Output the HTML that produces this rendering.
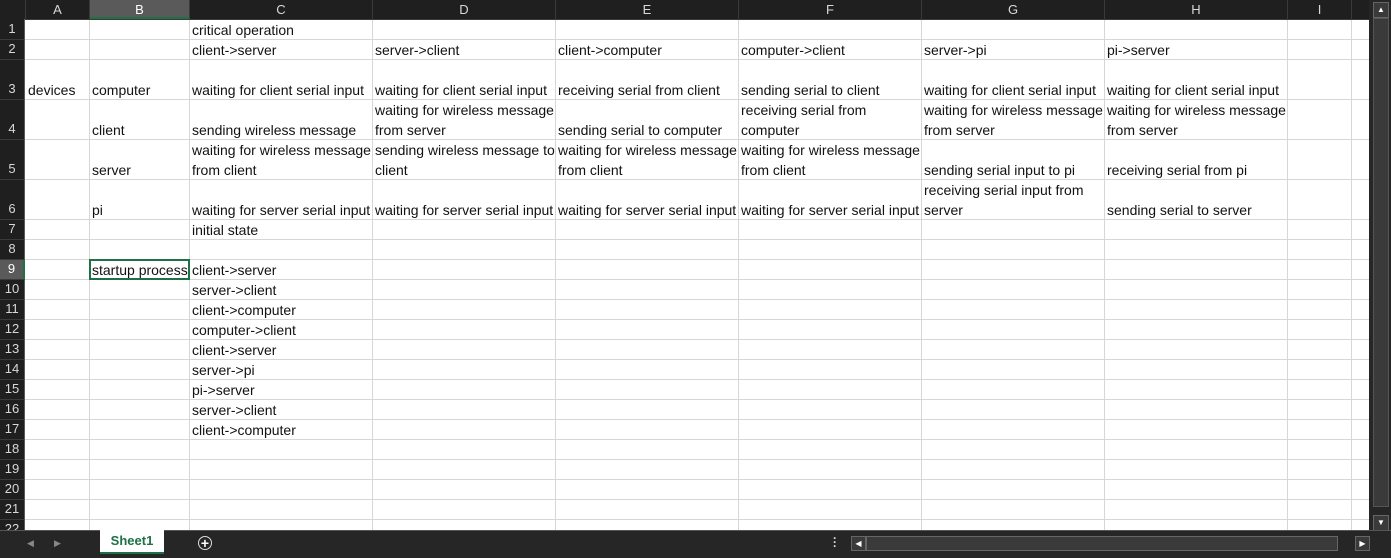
<!DOCTYPE html><html><head><style>
body{margin:0;width:1391px;height:558px;overflow:hidden;background:#262626;font-family:"Liberation Sans",sans-serif;position:relative}
#sheet{position:absolute;left:0;top:0;width:1369px;height:530px;background:#fff;overflow:hidden}
.h{position:absolute;left:25px;width:1344px;height:1px;background:#d6d6d6}
.v{position:absolute;top:19px;width:1px;height:511px;background:#d6d6d6}
.c{position:absolute;font-size:14px;color:#111;line-height:20px;padding-left:3px;display:flex;align-items:flex-end;white-space:nowrap}
#ch{position:absolute;left:0;top:0;width:1369px;height:19px;background:#1f1f1f;border-bottom:1px solid #3a3a3a}
.ch{position:absolute;top:0;height:19px;line-height:19px;text-align:center;color:#d8d8d8;font-size:13px;border-right:1px solid #3a3a3a;box-sizing:border-box}
#rh{position:absolute;left:0;top:19px;width:25px;height:511px;background:#1f1f1f;border-right:1px solid #5a5a5a;box-sizing:border-box}
.rh{position:absolute;left:0;width:24px;text-align:center;color:#d8d8d8;font-size:13px;border-bottom:1px solid #3a3a3a;box-sizing:border-box;display:flex;align-items:flex-end;justify-content:center;line-height:20px}
#bar{position:absolute;left:0;top:530px;width:1391px;height:28px;background:#262626;border-top:1px solid #555;box-sizing:border-box}
</style></head><body>
<div id="sheet">
<div class="h" style="top:39px"></div><div class="h" style="top:59px"></div><div class="h" style="top:99px"></div><div class="h" style="top:139px"></div><div class="h" style="top:179px"></div><div class="h" style="top:219px"></div><div class="h" style="top:239px"></div><div class="h" style="top:259px"></div><div class="h" style="top:279px"></div><div class="h" style="top:299px"></div><div class="h" style="top:319px"></div><div class="h" style="top:339px"></div><div class="h" style="top:359px"></div><div class="h" style="top:379px"></div><div class="h" style="top:399px"></div><div class="h" style="top:419px"></div><div class="h" style="top:439px"></div><div class="h" style="top:459px"></div><div class="h" style="top:479px"></div><div class="h" style="top:499px"></div><div class="h" style="top:519px"></div>
<div class="v" style="left:89px"></div><div class="v" style="left:189px"></div><div class="v" style="left:372px"></div><div class="v" style="left:555px"></div><div class="v" style="left:738px"></div><div class="v" style="left:921px"></div><div class="v" style="left:1104px"></div><div class="v" style="left:1287px"></div><div class="v" style="left:1351px"></div>

<div class="c" style="left:189px;top:20px;height:20px">critical operation</div>
<div class="c" style="left:189px;top:40px;height:20px">client-&gt;server</div>
<div class="c" style="left:372px;top:40px;height:20px">server-&gt;client</div>
<div class="c" style="left:555px;top:40px;height:20px">client-&gt;computer</div>
<div class="c" style="left:738px;top:40px;height:20px">computer-&gt;client</div>
<div class="c" style="left:921px;top:40px;height:20px">server-&gt;pi</div>
<div class="c" style="left:1104px;top:40px;height:20px">pi-&gt;server</div>

<div class="c" style="left:25px;top:60px;height:40px">devices</div>
<div class="c" style="left:89px;top:60px;height:40px">computer</div>
<div class="c" style="left:189px;top:60px;height:40px">waiting for client serial input</div>
<div class="c" style="left:372px;top:60px;height:40px">waiting for client serial input</div>
<div class="c" style="left:555px;top:60px;height:40px">receiving serial from client</div>
<div class="c" style="left:738px;top:60px;height:40px">sending serial to client</div>
<div class="c" style="left:921px;top:60px;height:40px">waiting for client serial input</div>
<div class="c" style="left:1104px;top:60px;height:40px">waiting for client serial input</div>

<div class="c" style="left:89px;top:100px;height:40px">client</div>
<div class="c" style="left:189px;top:100px;height:40px">sending wireless message</div>
<div class="c" style="left:372px;top:100px;height:40px">waiting for wireless message<br>from server</div>
<div class="c" style="left:555px;top:100px;height:40px">sending serial to computer</div>
<div class="c" style="left:738px;top:100px;height:40px">receiving serial from<br>computer</div>
<div class="c" style="left:921px;top:100px;height:40px">waiting for wireless message<br>from server</div>
<div class="c" style="left:1104px;top:100px;height:40px">waiting for wireless message<br>from server</div>

<div class="c" style="left:89px;top:140px;height:40px">server</div>
<div class="c" style="left:189px;top:140px;height:40px">waiting for wireless message<br>from client</div>
<div class="c" style="left:372px;top:140px;height:40px">sending wireless message to<br>client</div>
<div class="c" style="left:555px;top:140px;height:40px">waiting for wireless message<br>from client</div>
<div class="c" style="left:738px;top:140px;height:40px">waiting for wireless message<br>from client</div>
<div class="c" style="left:921px;top:140px;height:40px">sending serial input to pi</div>
<div class="c" style="left:1104px;top:140px;height:40px">receiving serial from pi</div>

<div class="c" style="left:89px;top:180px;height:40px">pi</div>
<div class="c" style="left:189px;top:180px;height:40px">waiting for server serial input</div>
<div class="c" style="left:372px;top:180px;height:40px">waiting for server serial input</div>
<div class="c" style="left:555px;top:180px;height:40px">waiting for server serial input</div>
<div class="c" style="left:738px;top:180px;height:40px">waiting for server serial input</div>
<div class="c" style="left:921px;top:180px;height:40px">receiving serial input from<br>server</div>
<div class="c" style="left:1104px;top:180px;height:40px">sending serial to server</div>

<div class="c" style="left:189px;top:220px;height:20px">initial state</div>
<div style="position:absolute;left:89px;top:259px;width:101px;height:21px;border:2px solid #1e7145;box-sizing:border-box"></div>
<div class="c" style="left:89px;top:260px;height:20px">startup process</div>
<div class="c" style="left:189px;top:260px;height:20px">client-&gt;server</div>
<div class="c" style="left:189px;top:280px;height:20px">server-&gt;client</div>
<div class="c" style="left:189px;top:300px;height:20px">client-&gt;computer</div>
<div class="c" style="left:189px;top:320px;height:20px">computer-&gt;client</div>
<div class="c" style="left:189px;top:340px;height:20px">client-&gt;server</div>
<div class="c" style="left:189px;top:360px;height:20px">server-&gt;pi</div>
<div class="c" style="left:189px;top:380px;height:20px">pi-&gt;server</div>
<div class="c" style="left:189px;top:400px;height:20px">server-&gt;client</div>
<div class="c" style="left:189px;top:420px;height:20px">client-&gt;computer</div>

<div id="ch">
<div class="ch" style="left:0;width:26px"></div>
<div class="ch" style="left:26px;width:64px">A</div>
<div class="ch" style="left:90px;width:100px;background:#5a5a5a;color:#fff;border-bottom:2px solid #1e7145">B</div>
<div class="ch" style="left:190px;width:183px">C</div>
<div class="ch" style="left:373px;width:183px">D</div>
<div class="ch" style="left:556px;width:183px">E</div>
<div class="ch" style="left:739px;width:183px">F</div>
<div class="ch" style="left:922px;width:183px">G</div>
<div class="ch" style="left:1105px;width:183px">H</div>
<div class="ch" style="left:1288px;width:64px">I</div>
</div>
<div id="rh">
<div class="rh" style="top:0;height:21px">1</div>
<div class="rh" style="top:21px;height:20px">2</div>
<div class="rh" style="top:41px;height:40px">3</div>
<div class="rh" style="top:81px;height:40px">4</div>
<div class="rh" style="top:121px;height:40px">5</div>
<div class="rh" style="top:161px;height:40px">6</div>
<div class="rh" style="top:201px;height:20px">7</div>
<div class="rh" style="top:221px;height:20px">8</div>
<div class="rh" style="top:241px;height:20px;background:#5a5a5a;color:#fff;border-right:2px solid #1e7145;width:25px">9</div>
<div class="rh" style="top:261px;height:20px">10</div>
<div class="rh" style="top:281px;height:20px">11</div>
<div class="rh" style="top:301px;height:20px">12</div>
<div class="rh" style="top:321px;height:20px">13</div>
<div class="rh" style="top:341px;height:20px">14</div>
<div class="rh" style="top:361px;height:20px">15</div>
<div class="rh" style="top:381px;height:20px">16</div>
<div class="rh" style="top:401px;height:20px">17</div>
<div class="rh" style="top:421px;height:20px">18</div>
<div class="rh" style="top:441px;height:20px">19</div>
<div class="rh" style="top:461px;height:20px">20</div>
<div class="rh" style="top:481px;height:20px">21</div>
<div class="rh" style="top:501px;height:20px">22</div>
</div>
</div>
<div style="position:absolute;left:1369px;top:0;width:22px;height:530px;background:#262626"></div>
<div style="position:absolute;left:1373px;top:2px;width:14px;height:14px;border:1px solid #666;background:#3a3a3a;color:#fff;font-size:8px;text-align:center;line-height:14px">▲</div>
<div style="position:absolute;left:1373px;top:18px;width:14px;height:487px;border:1px solid #555;background:#3a3a3a"></div>
<div style="position:absolute;left:1373px;top:515px;width:14px;height:14px;border:1px solid #666;background:#3a3a3a;color:#fff;font-size:8px;text-align:center;line-height:14px">▼</div>
<div id="bar">
<span style="position:absolute;left:27px;top:7px;color:#888;font-size:9px">◀</span>
<span style="position:absolute;left:54px;top:7px;color:#888;font-size:9px">▶</span>
<div style="position:absolute;left:100px;top:-1px;width:64px;height:22px;background:#fff;border-bottom:2px solid #1e7145;color:#1e7145;font-weight:bold;font-size:13px;text-align:center;line-height:22px">Sheet1</div>
<div style="position:absolute;left:198px;top:5px;width:12px;height:12px;border:1.5px solid #ddd;border-radius:50%;color:#fff;font-size:14px;line-height:12px;text-align:center;font-weight:bold">+</div>
<div style="position:absolute;left:833px;top:5px;color:#ddd;font-size:12px;line-height:4px;font-weight:bold">·<br>·<br>·</div>
<div style="position:absolute;left:851px;top:5px;width:13px;height:13px;border:1px solid #666;background:#3a3a3a;color:#fff;font-size:8px;line-height:13px;text-align:center">◀</div>
<div style="position:absolute;left:866px;top:5px;width:470px;height:13px;border:1px solid #666;background:#3a3a3a"></div>
<div style="position:absolute;left:1355px;top:5px;width:13px;height:13px;border:1px solid #666;background:#3a3a3a;color:#fff;font-size:8px;line-height:13px;text-align:center">▶</div>
</div>
</body></html>
